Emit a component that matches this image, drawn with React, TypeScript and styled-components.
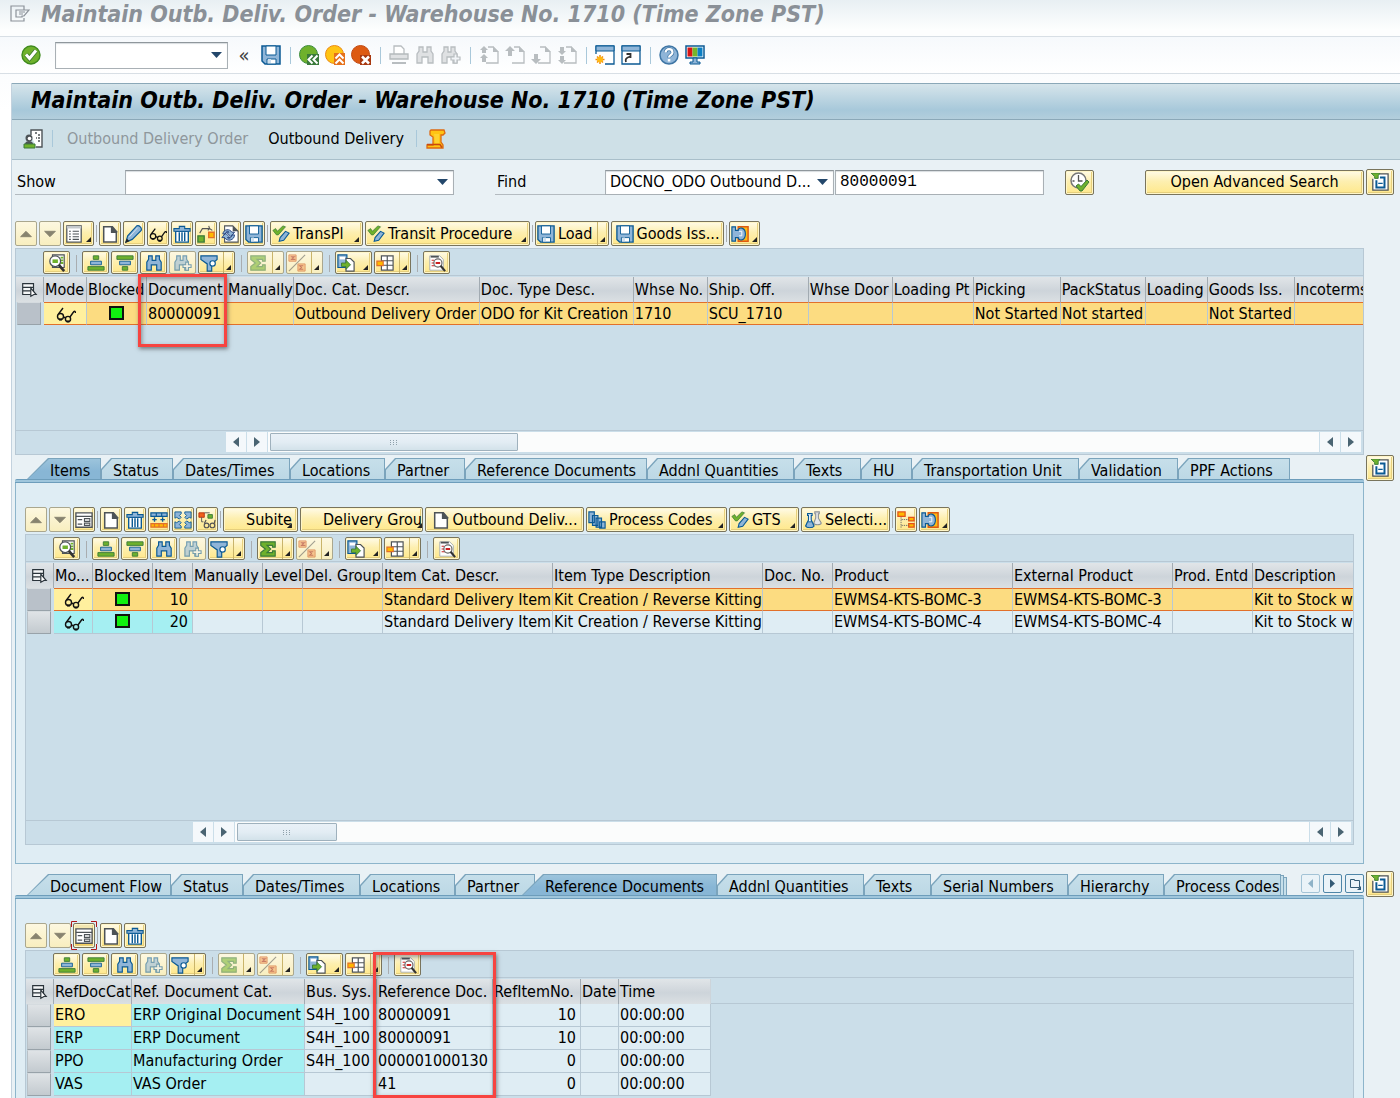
import React from "react";
import styled, { createGlobalStyle, css } from "styled-components";

const SANS = `"DejaVu Sans Condensed", "DejaVu Sans", "Noto Sans", sans-serif`;
const MONO = `"Liberation Mono", monospace`;

const c = {
  ink: "#000",
  body: "#e9f1f5",
  panel: "#dfedf4",
  grid: "#cbdee9",
  line: "#b7c8d4",
  tabLine: "#6d9dbb",
  select: "#fcdc81",
  selectLine: "#e2702a",
  key: "#a5eff2",
  focus: "#fff09e",
  blue: "#0b5a94",
  sky: "#8fb5d8",
  green: "#6fb12c",
  darkGreen: "#3a7a3a",
  grey: "#4d5357",
};

const Global = createGlobalStyle`
  * { box-sizing: border-box; }
  body { margin: 0; background: #fff; }
  button, input, select { font: inherit; color: inherit; }
`;

/* ---------- icons ---------- */

const pageShape = (
  <>
    <path d="M3 2h9l5 6v11H3z" fill="#fff" stroke={c.grey} strokeWidth="1.700" />
    <path d="M11 1h2l5 6v2h-7z" fill={c.grey} />
  </>
);
const glasses = (
  <g fill="none" stroke="#111" strokeWidth="1.400">
    <circle cx="4.500" cy="12.500" r="3" />
    <circle cx="12" cy="15" r="2.600" />
    <path d="M2.500 10L7 4M7.500 13l2 .8M14 13L17.500 8c1-1.500 2-.5 2 1" />
    <path d="M10.500 17.500h3M3 15.500h3" strokeWidth="2" />
  </g>
);
const binoculars = (fill: string, edge: string) => (
  <path
    d="M2 18V9l2-3V2h4v5h4V2h4v4l2 3v9h-5v-6H7v6z"
    fill={fill}
    stroke={edge}
    strokeWidth="1.300"
  />
);
const binoNext = (fill: string, edge: string) => (
  <>
    <path d="M1 18V9l2-3V2h4v5h3V2h4v4l2 3v9h-4v-6H6v6z" fill={fill} stroke={edge} strokeWidth="1.300" />
    <path d="M13 9h3v3h3v3h-3v3h-3v-3h-3v-3h3z" fill="#f2f5f8" stroke={edge} strokeWidth="1.200" />
  </>
);
const disk = (
  <>
    <path d="M1 1h18v18H4l-3-3z" fill={c.sky} stroke={c.blue} strokeWidth="1.500" />
    <path d="M5 1h10v9H5z" fill="#fff" stroke={c.blue} />
    <path d="M6 14h9v5H6z" fill="#fff" stroke={c.blue} />
    <path d="M7 14h3v4H7z" fill="#cfe0ee" />
  </>
);
const checkPencil = (
  <>
    <path d="M1 6l3-2 2 3 6-6 3 1-8 9H5z" fill={c.green} stroke={c.darkGreen} strokeWidth=".8" />
    <path d="M8 18l1-4 6-7 4 2-6 8z" fill={c.sky} stroke={c.blue} strokeWidth="1.200" />
  </>
);
const pagedBase = (
  <path d="M9 2h5l5 5v11H7" fill="none" stroke="#b8bdc0" strokeWidth="1.300" />
);
const fold = <path d="M14 1v6h6z" fill="#b8bdc0" />;
const puzzle = (
  <>
    <path d="M8 2h11v16H8z" fill="#fdb913" stroke="#dd5a12" strokeWidth="1.600" />
    <path d="M1 2h4v4h3c0-4 8-4 8 4s-8 8-8 4H5v4H1z" fill={c.sky} stroke={c.blue} strokeWidth="1.300" />
    <path d="M9 7h3v5H9" fill="none" stroke="#fff" />
  </>
);
const ball = (fill: string, edge: string) => (
  <circle cx="9.500" cy="9.500" r="9" fill={fill} stroke={edge} />
);

const ICONS: Record<string, React.ReactNode> = {
  menuFlag: (
    <path d="M14 6V2H1v15h13v-3M6 6h13l-5 6h-2v1H6zM9 8h6M9 10h4" fill="none" stroke="#8b9299" strokeWidth="1.200" />
  ),
  ok: (
    <>
      <circle cx="10" cy="10" r="9" fill={c.green} stroke="#3f8a1e" strokeWidth="1.400" />
      <path d="M5 9.500l3.500 4L15 5.500" fill="none" stroke="#3f7a2e" strokeWidth="4.600" />
      <path d="M5 9.500l3.500 4L15 5.500" fill="none" stroke="#fff" strokeWidth="3" />
    </>
  ),
  disk,
  back: (
    <>
      {ball(c.green, "#3c8c3c")}
      <path d="M8 9h12v11H8z" fill="#3a7a3a" />
      <path d="M13.500 10.500l-4 4 4 4M18.500 10.500l-4 4 4 4" fill="none" stroke="#fff" strokeWidth="2" />
    </>
  ),
  exit: (
    <>
      {ball("#ffc414", "#ec8a12")}
      <path d="M9 8h11v12H9z" fill="#e5701a" />
      <path d="M10.500 13.500l4-4 4 4M10.500 18.500l4-4 4 4" fill="none" stroke="#fff" strokeWidth="2" />
    </>
  ),
  cancel: (
    <>
      {ball("#dd5a12", "#c24a12")}
      <path d="M9 10h11v10H9z" fill="#a8380f" />
      <path d="M11 11.500l7 7M18 11.500l-7 7" stroke="#fff" strokeWidth="2.500" />
    </>
  ),
  print: (
    <>
      <path d="M5 9V1h7l3 3v5" fill="#fff" stroke="#b8bdc0" strokeWidth="1.300" />
      <path d="M1 9h18v5H1z" fill="#dfe1e3" stroke="#b4b9bc" strokeWidth="1.300" />
      <path d="M3 18h14" stroke="#b8bdc0" strokeWidth="2" />
    </>
  ),
  findGrey: binoculars("#dfe1e3", "#b8bdc0"),
  findNextGrey: binoNext("#dfe1e3", "#b8bdc0"),
  firstPage: (
    <>
      {pagedBase}
      {fold}
      <path d="M5 1l4 4H7v3H3V5H1zM5 9l4 4H7v4H3v-4H1z" fill="#b8bdc0" />
    </>
  ),
  prevPage: (
    <>
      {pagedBase}
      {fold}
      <path d="M5 1l5 5H7v5H3V6H0z" fill="#b8bdc0" />
    </>
  ),
  nextPage: (
    <>
      {pagedBase}
      {fold}
      <path d="M5 19l5-5H7V9H3v5H0z" fill="#b8bdc0" />
    </>
  ),
  lastPage: (
    <>
      {pagedBase}
      {fold}
      <path d="M5 10l4-4H7V2H3v4H1zM5 19l4-4H7v-4H3v4H1z" fill="#b8bdc0" />
    </>
  ),
  newSession: (
    <>
      <path d="M1 1h18v18H1z" fill="#fff" stroke={c.blue} strokeWidth="1.300" />
      <path d="M1 1h18v5H1z" fill={c.sky} stroke={c.blue} />
      <path d="M0 9h10v11H0z" fill="#fff" />
      <path d="M5 10v9M.5 14.500h9M2 11.500l6 6M8 11.500l-6 6" stroke="#f08a12" strokeWidth="1.500" />
      <circle cx="5" cy="14.500" r="3" fill="#ffb812" />
    </>
  ),
  shortcut: (
    <>
      <path d="M1 1h18v18H1z" fill="#fff" stroke={c.blue} strokeWidth="1.300" />
      <path d="M1 1h18v5H1z" fill={c.sky} stroke={c.blue} />
      <path d="M5 17c-1-3 0-4 4-5.500M5.500 9h4v4" fill="none" stroke="#333" strokeWidth="1.800" />
    </>
  ),
  help: (
    <>
      <circle cx="10" cy="10" r="9" fill={c.sky} stroke="#3f76a5" strokeWidth="1.500" />
      <path d="M6.500 7.500C6.500 3 13.500 3 13.500 7.500c0 2.500-3.500 2.500-3.500 5" fill="none" stroke="#3f76a5" strokeWidth="3.600" />
      <path d="M6.500 7.500C6.500 3 13.500 3 13.500 7.500c0 2.500-3.500 2.500-3.500 5" fill="none" stroke="#fff" strokeWidth="2.200" />
      <path d="M8.800 14h2.500v2.500H8.800z" fill="#fff" />
    </>
  ),
  monitor: (
    <>
      <path d="M1 1h18v12H1z" fill="#fff" stroke={c.blue} strokeWidth="1.500" />
      <path d="M2.500 2.500h5v9h-5z" fill="#d81414" />
      <path d="M7.500 2.500h5v9h-5z" fill="#76b52b" />
      <path d="M12.500 2.500h5v9h-5z" fill="#0a7fc4" />
      <path d="M8 13h4v4h3v2H5v-2h3z" fill={c.sky} stroke={c.blue} />
    </>
  ),
  personCard: (
    <>
      <path d="M8 6V1h11v17h-6" fill="#fff" stroke={c.grey} strokeWidth="1.400" />
      <path d="M12 4h2M15 6h2M13 9h1M15 9h2M15 12h2" stroke={c.grey} strokeWidth="1.500" />
      <circle cx="6" cy="9" r="3.500" fill={c.grey} />
      <path d="M2 15c0-4 8-4 8 0z" fill={c.grey} />
      <circle cx="6.500" cy="9.500" r="1.800" fill="#fff" />
      <path d="M1 15h11v4H1z" fill={c.green} stroke={c.darkGreen} />
    </>
  ),
  scroll: (
    <>
      <path d="M5 1h13l1 3-2 2h-2v7l2 3v3H1v-3h6V8L4 6V2z" fill="#ffc414" stroke="#dd6a12" strokeWidth="1.300" />
      <path d="M8 5h5v9H9z" fill="#ffd230" />
      <path d="M1 15.500h13l2 3" fill="none" stroke="#c8490f" strokeWidth="1.500" />
    </>
  ),
  up: <path d="M10 7l6 6H4z" fill="#2b2922" stroke="#2b2922" />,
  down: <path d="M10 13l6-6H4z" fill="#2b2922" stroke="#2b2922" />,
  list: (
    <>
      <path d="M2 1h16v18H2z" fill="#fff" stroke={c.grey} strokeWidth="1.400" />
      <path d="M2 1h16v3H2z" fill="#c5c9cc" />
      <path d="M4.500 7h2M4.500 10h2M4.500 13h2M4.500 16h2M8.500 7h7M8.500 10h7M8.500 13h7M8.500 16h7" stroke={c.grey} strokeWidth="1.200" />
    </>
  ),
  form: (
    <>
      <path d="M1 2h18v16H1z" fill="#fff" stroke={c.grey} strokeWidth="1.500" />
      <path d="M1 6h18M3 9.500h5M3 14.500h5" stroke={c.grey} strokeWidth="1.300" />
      <path d="M10.500 8.500h6v3h-6zM10.500 13.500h6v2.500h-6z" fill="none" stroke={c.grey} strokeWidth="1.200" />
    </>
  ),
  page: pageShape,
  pencil: (
    <>
      <path d="M1 19l2-7L13 1c3-1 6 2 5 5L8 16z" fill={c.sky} stroke={c.blue} strokeWidth="1.300" />
      <path d="M5 13L14 3" stroke="#dce9f4" />
      <path d="M0 20l2-5 3 3z" fill="#222" />
    </>
  ),
  glasses,
  trash: (
    <>
      <path d="M3 7h14v12H3z" fill="#fff" stroke={c.blue} strokeWidth="1.500" />
      <path d="M7 8v10M10 8v10M13 8v10" stroke={c.blue} strokeWidth="1.600" />
      <path d="M1 4h6V1.500h6V4h6v3H1z" fill={c.sky} stroke={c.blue} strokeWidth="1.200" />
    </>
  ),
  swap: (
    <>
      <path d="M1 12h7v7H1z" fill={c.green} stroke={c.darkGreen} strokeWidth="1.500" />
      <path d="M13 8h6v6h-6z" fill="#ffb800" stroke="#e2702a" strokeWidth="1.500" />
      <path d="M3 9l3-5h8l3 2M13 1l1 3-2 2" fill="none" stroke="#555" strokeWidth="1.200" />
    </>
  ),
  refresh: (
    <>
      <path d="M4 1h9l6 6v12H4z" fill="#fff" stroke={c.grey} strokeWidth="1.200" />
      <path d="M13 1l6 6h-6z" fill={c.grey} />
      <path d="M2 10c1-6 8-6 10-2h3l-4 5-5-5h3c-2-2-4 0-4 2zM15 11c0 6-8 8-11 3H1l4-5 5 5H7c2 2 5 0 5-3z" fill={c.sky} stroke="#23407a" />
    </>
  ),
  checkPencil,
  puzzle,
  detail: (
    <>
      <path d="M5 1h13v14H5z" fill="#fff" stroke={c.grey} strokeWidth="1.300" />
      <path d="M14 4h3M14 7h3M14 10h3" stroke={c.green} strokeWidth="2" />
      <circle cx="8" cy="8" r="6" fill="#fff" stroke={c.grey} strokeWidth="1.400" />
      <path d="M5 6h6v4H5z" fill={c.green} />
      <path d="M12 12l6 7" stroke="#333" strokeWidth="3" />
    </>
  ),
  sortAsc: (
    <>
      <path d="M7 2h6v4H7z" fill={c.green} stroke={c.darkGreen} />
      <path d="M4 8h12v4H4z" fill={c.sky} stroke={c.blue} />
      <path d="M1 14h18v4H1z" fill={c.green} stroke={c.darkGreen} />
    </>
  ),
  sortDesc: (
    <>
      <path d="M1 2h18v4H1z" fill={c.green} stroke={c.darkGreen} />
      <path d="M4 8h12v4H4z" fill={c.sky} stroke={c.blue} />
      <path d="M7 14h6v4H7z" fill={c.green} stroke={c.darkGreen} />
    </>
  ),
  find: binoculars(c.sky, c.blue),
  findNext: binoNext(c.sky, c.blue),
  filter: (
    <>
      <path d="M1 2h18v4l-6 5v8H8v-8L1 6z" fill={c.sky} stroke={c.blue} strokeWidth="1.300" />
      <circle cx="14" cy="10.500" r="3" fill="#fff" stroke={c.blue} strokeWidth="1.300" />
    </>
  ),
  sum: (
    <path d="M2 2h16v6h-3V6H9l4 4-4 4h6v-2h3v6H2v-4l5-4-5-4z" fill={c.green} stroke={c.darkGreen} strokeWidth="1.300" />
  ),
  subtotal: (
    <>
      <path d="M1 1h8v7H1zM11 11h8v8h-8z" fill="#f4a460" stroke="#c8490f" />
      <path d="M3 3h4L5 4.500 7 6H3M17 13h-4l2 2-2 2h4" fill="none" stroke="#a01b0a" strokeWidth="1.200" />
      <path d="M1 19L19 1" stroke="#555" strokeWidth="1.200" />
    </>
  ),
  exportFile: (
    <>
      <path d="M1 1h10v14H1z" fill={c.sky} stroke={c.blue} strokeWidth="1.300" />
      <path d="M3 3h6v3H3z" fill="#fff" />
      <path d="M10 5h5l4 4v10h-9z" fill="#fff" stroke={c.grey} strokeWidth="1.300" />
      <path d="M5 10h5V7l5 5-5 5v-3H5z" fill={c.green} stroke={c.darkGreen} />
    </>
  ),
  layout: (
    <>
      <path d="M6 2h13v16H6zM6 7.500h13M6 12.500h13M12.500 2v16" fill="#fff" stroke={c.grey} strokeWidth="1.300" />
      <path d="M1 8h7v5H1z" fill="#ffb800" stroke="#e2702a" strokeWidth="1.300" />
    </>
  ),
  preview: (
    <>
      <path d="M2 2h11l4 4v12H2z" fill="#fff" stroke="#a4aaae" />
      <path d="M3 2h9v2H3z" fill={c.grey} />
      <path d="M4 7h3M4 10h3M4 13h4" stroke="#c22" strokeWidth="1.200" />
      <circle cx="11" cy="10" r="4.500" fill="#fff" stroke="#666" strokeWidth="1.300" />
      <path d="M8.500 10h5" stroke="#c22" strokeWidth="2.200" />
      <path d="M14 13l5 6" stroke="#333" strokeWidth="2.400" />
    </>
  ),
  insertRow: (
    <>
      <path d="M1 2h18v4H1zM7 2v4M13 2v4" fill={c.sky} stroke={c.blue} strokeWidth="1.300" />
      <path d="M5 7v5M2.500 9.500h5M14 7v5M11.500 9.500h5" stroke={c.blue} strokeWidth="1.500" />
      <path d="M1 14h18v4H1zM5 14v4M10 14v4M15 14v4" fill="#ffb800" stroke="#e2702a" strokeWidth="1.300" />
    </>
  ),
  expand: (
    <path d="M1 1h7v2L6 5l2 2-2 2-3-2-2 1zM19 1h-7v2l2 2-2 2 2 2 3-2 2 1zM1 19h7v-2l-2-2 2-2-2-2-3 2-2-1zM19 19h-7v-2l2-2-2-2 2-2 3 2 2-1z" fill={c.sky} stroke={c.blue} />
  ),
  treeView: (
    <>
      <path d="M1 2h6v5H1z" fill="#f0601a" stroke="#b8300f" />
      <path d="M11 4h5v4h-5z" fill={c.green} stroke={c.darkGreen} />
      <path d="M7 2h6M4 7v5h2" fill="none" stroke="#555" />
      <g fill="none" stroke="#555" strokeWidth="1.300">
        <circle cx="9.500" cy="16" r="2.600" />
        <circle cx="16" cy="16" r="2.600" />
        <path d="M7 14l2-4M18 14l1-4" />
      </g>
    </>
  ),
  stack: (
    <path d="M1 1h6v12H1zM5 5h6v11H5zM9 8h6v10H9zM13 12h6v7h-6z" fill={c.sky} stroke={c.blue} strokeWidth="1.300" />
  ),
  flasks: (
    <>
      <path d="M12 1h5v2h-1v5l3 5c1 3-9 3-8 0l2-5V3h-1z" fill="#e6e8ea" stroke="#8a9094" strokeWidth="1.200" />
      <path d="M4 3h5v2H8v5l3 6c1 3-10 3-9 0l3-6V5H4z" fill="#fff" stroke={c.blue} strokeWidth="1.300" />
      <path d="M4 12h5l2 5c-2 2-7 2-9 0z" fill={c.sky} stroke={c.blue} />
    </>
  ),
  tree: (
    <>
      <path d="M1 1h8v5H1zM13 7h6v4h-6zM13 14h6v4h-6z" fill="#ffb800" stroke="#e2521a" strokeWidth="1.400" />
      <path d="M4.500 7v12M5 9.500h8M5 16h8" fill="none" stroke="#666" strokeDasharray="1.500 1" />
    </>
  ),
  clockCheck: (
    <>
      <circle cx="8.500" cy="8.500" r="7.500" fill="#fff" stroke="#777" strokeWidth="1.500" />
      <path d="M8.500 3v6h4M2.500 9h2" fill="none" stroke="#555" strokeWidth="1.300" />
      <path d="M6 14l2.500-2 2.500 2.500L17 8l2 2-7 9h-2z" fill={c.green} stroke={c.darkGreen} />
    </>
  ),
  sidePage: (
    <>
      <path d="M2 6.500V19h17V1H9" fill="#fff" stroke={c.grey} strokeWidth="1.400" />
      <path d="M10 5h5v11H6V8" fill="#fff" stroke={c.blue} strokeWidth="2.200" />
      <path d="M8 11.500h5" stroke={c.blue} strokeWidth="1.300" />
      <path d="M0 0h10L8 3v3H4V4z" fill={c.green} stroke={c.darkGreen} />
    </>
  ),
  pickRows: (
    <>
      <path d="M3 3h12v12H3zM3 7h12M3 11h9" fill="#f4f6f7" stroke="#2a333a" strokeWidth="1.300" />
      <path d="M12 8l6 7h-2.500l-3.500 2z" fill="#fff" stroke="#2a333a" strokeWidth="1.300" />
    </>
  ),
  lamp: <path d="M3 3h13v12H3z" fill="#10f010" stroke="#111" strokeWidth="2" />,
};

const Svg = styled.svg`
  display: block;
  flex: none;
`;
const Icon = ({ name, size = 20 }: { name: string; size?: number }) => (
  <Svg width={size} height={size} viewBox="0 0 20 20" aria-hidden="true">
    {ICONS[name]}
  </Svg>
);

/* ---------- application frame ---------- */

const Page = styled.div`
  display: flex;
  flex-direction: column;
  min-height: 100vh;
  overflow: hidden;
  font: 16px/20px ${SANS};
  color: ${c.ink};
  background: linear-gradient(#f4f8fb, #fff 110px);
`;

const TitleStrip = styled.header`
  display: flex;
  align-items: center;
  gap: 11px;
  height: 37px;
  padding: 0 10px 8px;
  background: linear-gradient(#e8eff3, #fdfefe 30px);
  border-bottom: 1px solid #d8dfe5;
`;

const Title = styled.h1<{ $muted?: boolean }>`
  margin: 0;
  font-size: 23px;
  line-height: 28px;
  font-weight: bold;
  font-style: italic;
  white-space: nowrap;
  color: ${(p) => (p.$muted ? "#8a9097" : c.ink)};
`;

const CommandBar = styled.nav`
  display: flex;
  align-items: center;
  gap: 6px;
  height: 37px;
  padding-left: 21px;
  background: linear-gradient(#f6f9fc, #fff);
  border-bottom: 1px solid #d8dfe5;
`;

const FlatButton = styled.button`
  display: flex;
  flex: none;
  padding: 0;
  border: 0;
  background: none;
`;

const BarSplit = styled.span`
  flex: none;
  width: 6px;
  height: 17px;
  background: linear-gradient(#a9c8da, #a9c8da) center / 1px 100% no-repeat;
`;

const Picker = styled.span<{ $width: number }>`
  display: inline-grid;
  flex: 0 1 ${(p) => p.$width}px;
  min-width: 0;
  align-items: center;

  &::after {
    content: "";
    grid-area: 1 / 1;
    justify-self: end;
    width: 11px;
    height: 6px;
    margin-right: 6px;
    background: #23476b;
    clip-path: polygon(0 0, 100% 0, 50% 100%);
    pointer-events: none;
  }
`;

const field = css`
  appearance: none;
  width: 100%;
  height: 25px;
  margin: 0;
  padding: 0 4px;
  border: 1px solid #a9b0b5;
  border-top-color: #8f979c;
  border-radius: 0;
  background: #fff;
  box-shadow: inset 0 1px 1px #d8dcdf;
`;
const Select = styled.select`
  ${field}
  grid-area: 1 / 1;
  padding-right: 16px;
  text-overflow: ellipsis;
`;
const Input = styled.input<{ $tall?: boolean }>`
  ${field}
  grid-area: 1 / 1;
  height: ${(p) => (p.$tall ? 27 : 25)}px;
  font-family: ${MONO};
`;

const CommandField = styled.span`
  display: flex;
  width: 173px;
  margin: 0 4px 0 8px;
`;
const Collapse = styled(FlatButton)`
  width: 12px;
  margin-right: 5px;
  justify-content: center;
  font-size: 20px;
  line-height: 20px;
  color: #444;
`;

const Window = styled.main`
  display: flex;
  flex: 1;
  flex-direction: column;
  margin: 9px 0 0 11px;
  background: ${c.body};
  border-left: 1px solid #c3d2de;
`;
const WindowTitle = styled.div`
  display: flex;
  align-items: center;
  height: 37px;
  padding: 0 0 3px 19px;
  border: 1px solid #8ba8b8;
  border-width: 1px 0;
  background: linear-gradient(#d6e5eb, #a7c8da 75%, #b3cedc);
`;
const ActionBar = styled.div`
  display: flex;
  align-items: center;
  height: 40px;
  padding: 0 0 2px 11px;
  background: #cee0e7;
  border-bottom: 1px solid #a9bfca;
`;
const ActionText = styled(FlatButton)<{ $left: number; $right: number }>`
  margin: 0 ${(p) => p.$right}px 0 ${(p) => p.$left}px;
  white-space: nowrap;

  &:disabled {
    color: #8e979c;
  }
`;

const Section = styled.section<{ $top?: number; $grow?: boolean }>`
  display: flex;
  gap: 2px;
  padding: ${(p) => p.$top ?? 0}px 6px 0 3px;
  flex: ${(p) => (p.$grow ? 1 : "none")};
`;
const SectionMain = styled.div`
  display: flex;
  flex: 1;
  flex-direction: column;
  min-width: 0;
`;

/* ---------- yellow buttons ---------- */

const YellowButton = styled.button<{ $width?: number; $pressed?: boolean; $short?: boolean; $center?: boolean }>`
  display: flex;
  flex: none;
  align-items: center;
  justify-content: ${(p) => (p.$center ? "center" : "flex-start")};
  gap: 3px;
  width: ${(p) => p.$width ?? 22}px;
  height: ${(p) => (p.$short ? 23 : 25)}px;
  padding: 0 0 0 ${(p) => (p.$center ? 0 : 1)}px;
  overflow: hidden;
  border: 1px solid #79745c;
  border-radius: 2px;
  background: ${(p) =>
    p.$pressed ? "linear-gradient(#f1e6b4, #fbe9a0 70%, #f0bf38)" : "linear-gradient(#fffbe8, #fdefb0 45%, #ffe88a)"};
  box-shadow: inset 0 0 0 1px #fff6c8, inset -1px -1px 0 1px #e6cf7c;
  white-space: nowrap;

  &:disabled {
    color: inherit;
    border-color: #aaa78e;
    background: linear-gradient(#fdf8e0, #f8eebf);
    box-shadow: none;
  }
  &:disabled svg {
    opacity: 0.55;
  }
`;
const SideButton = styled(YellowButton)`
  width: 28px;
  height: 26px;
`;
const ButtonLabel = styled.span`
  flex: none;
  text-align: left;
`;
const IconSlot = styled.span`
  flex: none;
  width: 18px;
`;
const Corner = styled.span<{ $split?: boolean; $over?: boolean }>`
  display: flex;
  flex: none;
  align-self: stretch;
  align-items: flex-end;
  justify-content: flex-end;
  width: ${(p) => (p.$split ? 11 : 8)}px;
  margin-left: ${(p) => (p.$over ? "-8px" : "auto")};
  padding: 0 3px 3px 0;
  border-left: ${(p) => (p.$split ? "1px solid #c9b46a" : "0")};

  &::after {
    content: "";
    width: 5px;
    height: 5px;
    background: #222;
    clip-path: polygon(100% 0, 100% 100%, 0 100%);
  }
`;

const Tools = styled.div`
  display: flex;
  gap: 2px;
  height: 25px;
`;
const ToolSplit = styled.span<{ $wide?: boolean }>`
  flex: none;
  align-self: center;
  width: ${(p) => (p.$wide ? 8 : 1)}px;
  height: 17px;
  background: linear-gradient(#a9adb0, #a9adb0) center / 1px 100% no-repeat;
`;

type Tool = {
  icon?: string;
  name?: string;
  label?: string;
  width?: number;
  corner?: "plain" | "split" | "over";
  off?: boolean;
  pressed?: boolean;
};
type ToolItem = Tool | "|";

const Focused = styled.span`
  position: relative;
  display: flex;

  > svg {
    position: absolute;
    top: -3px;
    left: -3px;
    pointer-events: none;
  }
`;

const ToolButton = ({ tool, short }: { tool: Tool; short?: boolean }) => {
  const button = (
    <YellowButton
      type="button"
      aria-label={tool.label ?? tool.name ?? tool.icon}
      $width={tool.width ?? (short ? 27 : 22)}
      $short={short}
      $pressed={tool.pressed}
      $center={!tool.corner}
      disabled={tool.off}
    >
      {tool.icon ? <Icon name={tool.icon} size={18} /> : <IconSlot />}
      {tool.label && <ButtonLabel>{tool.label}</ButtonLabel>}
      {tool.corner && <Corner $split={tool.corner === "split"} $over={tool.corner === "over"} />}
    </YellowButton>
  );
  return tool.pressed ? (
    <Focused>
      {button}
      <svg width="28" height="31" viewBox="0 0 28 31" aria-hidden="true">
        <path d="M1.500 7V1.500H7M21 1.500h5.500V7M26.500 24v5.500H21M7 29.500H1.500V24" fill="none" stroke="#b01818" />
      </svg>
    </Focused>
  ) : (
    button
  );
};

const ToolRow = ({ items, short }: { items: ToolItem[]; short?: boolean }) => (
  <>
    {items.map((t, i) =>
      t === "|" ? <ToolSplit key={i} $wide={short} /> : <ToolButton key={i} tool={t} short={short} />,
    )}
  </>
);

/* ---------- search row ---------- */

const SearchRow = styled.form`
  display: flex;
  align-items: center;
  height: 26px;
  margin-bottom: 26px;
`;
const SearchLabel = styled.label<{ $left?: number }>`
  flex: none;
  width: 110px;
  height: 25px;
  margin-left: ${(p) => p.$left ?? 0}px;
  padding-left: 2px;
  line-height: 24px;
  border-bottom: 1px solid #b4bbc0;
`;
const FindBox = styled.span`
  flex: 0 1 209px;
  display: flex;
  min-width: 0;
  margin: 0 21px 0 1px;
`;
const Push = styled.span`
  flex: 1;
`;

/* ---------- data grid ---------- */

const GridBox = styled.div<{ $grow?: boolean }>`
  position: relative;
  display: flex;
  flex: ${(p) => (p.$grow ? 1 : "none")};
  flex-direction: column;
  margin-top: 2px;
  background: ${c.grid};
  border: 1px solid ${c.line};
  border-bottom-width: ${(p) => (p.$grow ? 0 : 1)}px;
`;
const GridTools = styled.div`
  display: flex;
  gap: 2px;
  height: 27px;
  padding: 2px 0 0 27px;
  border-bottom: 1px solid ${c.line};
`;
const GridView = styled.div<{ $height: number }>`
  min-height: ${(p) => p.$height}px;
  margin-top: 1px;
  overflow: hidden;
  background: linear-gradient(${c.line}, ${c.line}) 0 24px / 100% 1px no-repeat;
`;
const Table = styled.table`
  table-layout: fixed;
  width: max-content;
  border-collapse: separate;
  border-spacing: 0;
`;
const HeadCell = styled.th<{ $last?: boolean }>`
  height: 25px;
  padding: 0 0 0 1px;
  overflow: hidden;
  text-align: left;
  font-weight: normal;
  white-space: nowrap;
  background: linear-gradient(#e1e5e8, #cdd4da 55%, #dbe0e3);
  border-right: 1px solid ${(p) => (p.$last ? "#cdd4da" : "#a2abb2")};

  > svg {
    margin-left: 3px;
  }
`;
type Tone = "plain" | "select" | "key" | "focus";
const tones: Record<Tone, string> = { plain: c.panel, select: c.select, key: c.key, focus: c.focus };
const Cell = styled.td<{ $tone: Tone; $selected?: boolean; $right?: boolean }>`
  height: 23px;
  padding: 0 ${(p) => (p.$right ? 4 : 0)}px 0 1px;
  overflow: hidden;
  text-align: ${(p) => (p.$right ? "right" : "left")};
  white-space: nowrap;
  background: ${(p) => tones[p.$tone]};
  border-right: 1px solid ${c.line};
  border-bottom: 1px solid ${(p) => (p.$selected ? c.selectLine : c.line)};
  ${(p) => p.$selected && `border-top: 1px solid ${c.selectLine};`}

  > svg {
    margin: 0 auto;
  }
`;
const RowMark = styled.td`
  height: 23px;
  padding: 0 3px 0 1px;
  background: ${c.grid};
`;
const RowButton = styled.button<{ $selected?: boolean }>`
  display: block;
  width: 100%;
  height: 23px;
  padding: 0;
  border: 1px solid #a9b2b9;
  border-color: #d5dbdf #98a2a9 #98a2a9 #b9c1c7;
  background: ${(p) => (p.$selected ? "#b9c1c9" : "linear-gradient(#dfe3e6, #c3cacf)")};
`;

type Column = { title: string; width: number; right?: boolean };
type Row = { selected?: boolean; cells: string[]; tone: (i: number) => Tone };

const cellBody = (v: string) => {
  if (v === "@display") return <Icon name="glasses" />;
  if (v === "@green") return <Icon name="lamp" />;
  return v;
};

const DataTable = ({ columns, rows, label }: { columns: Column[]; rows: Row[]; label: string }) => (
  <Table aria-label={label}>
    <colgroup>
      <col width={28} />
      {columns.map((col) => (
        <col key={col.title} width={col.width} />
      ))}
    </colgroup>
    <thead>
      <tr>
        <HeadCell>
          <Icon name="pickRows" size={18} />
        </HeadCell>
        {columns.map((col, i) => (
          <HeadCell key={col.title} scope="col" $last={i === columns.length - 1}>
            {col.title}
          </HeadCell>
        ))}
      </tr>
    </thead>
    <tbody>
      {rows.map((row, r) => (
        <tr key={r}>
          <RowMark>
            <RowButton type="button" aria-label={`Row ${r + 1}`} $selected={row.selected} />
          </RowMark>
          {row.cells.map((v, i) => (
            <Cell key={i} $tone={row.tone(i)} $selected={row.selected} $right={columns[i].right}>
              {cellBody(v)}
            </Cell>
          ))}
        </tr>
      ))}
    </tbody>
  </Table>
);

/* ---------- scroll bar ---------- */

const ScrollRow = styled.div<{ $left: number }>`
  display: flex;
  gap: 1px;
  height: 24px;
  padding: 1px 2px 2px ${(p) => p.$left}px;
  border-top: 1px solid ${c.line};
`;
const ScrollArrow = styled.button<{ $back?: boolean }>`
  display: flex;
  flex: none;
  align-items: center;
  justify-content: center;
  width: 20px;
  height: 20px;
  padding: 0;
  border: 0;
  background: #f4f8fb;

  &::after {
    content: "";
    width: 6px;
    height: 10px;
    background: #4a6472;
    clip-path: ${(p) => (p.$back ? "polygon(100% 0, 100% 100%, 0 50%)" : "polygon(0 0, 100% 50%, 0 100%)")};
  }
`;
const Track = styled.div`
  flex: 1;
  height: 20px;
  padding: 1px 2px;
  background: #fbfcfc;
`;
const Thumb = styled.div<{ $width: number }>`
  display: flex;
  align-items: center;
  justify-content: center;
  width: ${(p) => p.$width}px;
  height: 18px;
  border: 1px solid #9fb1bd;
  border-radius: 1px;
  background: linear-gradient(#e9f1f7, #e3edf4 50%, #d3e2ea);
`;
const ScrollBar = ({ left, thumb }: { left: number; thumb: number }) => (
  <ScrollRow $left={left}>
    <ScrollArrow type="button" aria-label="Scroll left" $back />
    <ScrollArrow type="button" aria-label="Scroll right" />
    <Track>
      <Thumb $width={thumb}>
        <svg width="9" height="5" viewBox="0 0 9 5" aria-hidden="true">
          <path d="M0 .5h1M3 .5h1M6 .5h1M0 2.500h1M3 2.500h1M6 2.500h1M0 4.500h1M3 4.500h1M6 4.500h1" stroke="#8fa0ab" />
        </svg>
      </Thumb>
    </Track>
    <ScrollArrow type="button" aria-label="Scroll left" $back />
    <ScrollArrow type="button" aria-label="Scroll right" />
  </ScrollRow>
);

/* ---------- tabs ---------- */

const TabHead = styled.div`
  display: flex;
  height: 24px;
  padding: 3px 0 0 12px;
`;
const Tab = styled.button<{ $width: number; $active?: boolean; $slant?: boolean; $overlap?: boolean }>`
  --cut: ${(p) => (p.$slant ? "polygon(0 100%, 21px 0, 100% 0, 100% 100%)" : "polygon(0 11px, 10px 0, 100% 0, 100% 100%, 0 100%)")};
  position: relative;
  isolation: isolate;
  flex: none;
  width: ${(p) => p.$width}px;
  height: 21px;
  margin-left: ${(p) => (p.$overlap ? -13 : 0)}px;
  padding: 1px 0 0 ${(p) => (p.$slant ? 23 : 12)}px;
  border: 0;
  background: #7ba4bc;
  clip-path: var(--cut);
  text-align: left;
  line-height: 24px;
  white-space: nowrap;

  &::before {
    content: "";
    position: absolute;
    inset: 1px 1px 0 1px;
    z-index: -1;
    background: ${(p) => (p.$active ? "linear-gradient(#9cc4dc, #88b6d5 60%)" : "linear-gradient(#c6dfea, #bcd8e5)")};
    clip-path: var(--cut);
  }
`;
const StackEdge = styled.span<{ $top: number }>`
  width: 3px;
  height: ${(p) => 21 - p.$top}px;
  margin-top: ${(p) => p.$top}px;
  border: 1px solid #7ba4bc;
  border-width: 1px 1px 0 0;
  background: #c6dfea;
`;
const TabNav = styled.div`
  display: flex;
  gap: 3px;
  margin-left: auto;
`;
const TabNavButton = styled.button`
  display: flex;
  align-items: center;
  justify-content: center;
  width: 19px;
  height: 19px;
  padding: 0;
  border: 1px solid #4f86a8;
  border-radius: 2px;
  background: #eaf3f8;

  &:disabled {
    border-color: #a3c3d6;
    opacity: 1;
  }
`;
const TabRule = styled.div`
  height: 4px;
  border: 1px solid ${c.tabLine};
  border-width: 1px 0;
  border-radius: 2px 2px 0 0;
  background: #9fc6dc;
`;
const TabPanel = styled.div<{ $grow?: boolean }>`
  display: flex;
  flex: ${(p) => (p.$grow ? 1 : "none")};
  flex-direction: column;
  padding: 24px 9px ${(p) => (p.$grow ? 0 : 18)}px;
  border: 1px solid #8db5cb;
  border-top: 0;
  border-bottom-width: ${(p) => (p.$grow ? 0 : 1)}px;
  background: ${c.panel};
`;

type TabDef = { text: string; width: number; active?: boolean };
const Tabs = ({ tabs, children }: { tabs: TabDef[]; children?: React.ReactNode }) => (
  <>
    <TabHead role="tablist">
      {tabs.map((t, i) => (
        <Tab
          key={t.text}
          type="button"
          role="tab"
          aria-selected={!!t.active}
          $width={t.width}
          $active={t.active}
          $slant={i === 0 || t.active}
          $overlap={i > 0 && t.active}
        >
          {t.text}
        </Tab>
      ))}
      {children}
    </TabHead>
    <TabRule />
  </>
);

/* Annotation frame drawn over the grid */
const Marker = styled.div<{ $x: number; $y: number; $w: number; $h: number }>`
  position: absolute;
  left: ${(p) => p.$x}px;
  top: ${(p) => p.$y}px;
  width: ${(p) => p.$w}px;
  height: ${(p) => p.$h}px;
  border: 3px solid #f74440;
  box-shadow: 1px 2px 4px rgba(60, 60, 60, 0.6), inset 1px 2px 4px rgba(60, 60, 60, 0.5);
  pointer-events: none;
`;

/* ---------- data ---------- */

const commands: string[] = [
  "disk", "|", "back", "exit", "cancel", "|", "print", "findGrey", "findNextGrey", "|",
  "firstPage", "prevPage", "nextPage", "lastPage", "|", "newSession", "shortcut", "|", "help", "monitor",
];

const gridTools = (sumOff: boolean): ToolItem[] => [
  { icon: "sortAsc" },
  { icon: "sortDesc" },
  { icon: "find" },
  { icon: "findNext", off: true },
  { icon: "filter", width: 37, corner: "split" },
  "|",
  { icon: "sum", width: 37, corner: "split", off: sumOff },
  { icon: "subtotal", width: 37, corner: "split", off: true },
  "|",
  { icon: "exportFile", width: 37, corner: "plain" },
  { icon: "layout", width: 37, corner: "split" },
  "|",
  { icon: "preview" },
];

const headerTools: ToolItem[] = [
  { icon: "up", off: true },
  { icon: "down", off: true },
  { icon: "list", width: 31, corner: "plain" },
  "|",
  { icon: "page" },
  { icon: "pencil" },
  { icon: "glasses" },
  { icon: "trash" },
  { icon: "swap" },
  { icon: "refresh" },
  { icon: "disk" },
  "|",
  { icon: "checkPencil", label: "TransPl", width: 93, corner: "plain" },
  { icon: "checkPencil", label: "Transit Procedure", width: 165, corner: "plain" },
  "|",
  { icon: "disk", label: "Load", width: 74, corner: "split" },
  { icon: "disk", label: "Goods Iss...", width: 113 },
  "|",
  { icon: "puzzle", width: 31, corner: "plain" },
];

const itemTools: ToolItem[] = [
  { icon: "up", off: true },
  { icon: "down", off: true },
  { icon: "form" },
  "|",
  { icon: "page" },
  { icon: "trash" },
  { icon: "insertRow" },
  { icon: "expand" },
  { icon: "treeView" },
  "|",
  { label: "Subite", width: 75, corner: "over" },
  { label: "Delivery Grou", width: 123, corner: "over" },
  { icon: "page", label: "Outbound Deliv...", width: 159 },
  { icon: "stack", label: "Process Codes", width: 141, corner: "plain" },
  { icon: "checkPencil", label: "GTS", width: 70, corner: "plain" },
  { icon: "flasks", label: "Selecti...", width: 89 },
  "|",
  { icon: "tree" },
  { icon: "puzzle", width: 31, corner: "plain" },
];

const detailTools: ToolItem[] = [
  { icon: "up", off: true },
  { icon: "down", off: true },
  { icon: "form", pressed: true },
  "|",
  { icon: "page" },
  { icon: "trash" },
];

const orderColumns: Column[] = [
  { title: "Mode", width: 43 },
  { title: "Blocked", width: 60 },
  { title: "Document", width: 80 },
  { title: "Manually", width: 66 },
  { title: "Doc. Cat. Descr.", width: 186 },
  { title: "Doc. Type Desc.", width: 154 },
  { title: "Whse No.", width: 74 },
  { title: "Ship. Off.", width: 101 },
  { title: "Whse Door", width: 84 },
  { title: "Loading Pt", width: 81 },
  { title: "Picking", width: 87 },
  { title: "PackStatus", width: 85 },
  { title: "Loading", width: 62 },
  { title: "Goods Iss.", width: 87 },
  { title: "Incoterms", width: 160 },
];
const orderRows: Row[] = [
  {
    selected: true,
    cells: [
      "@display", "@green", "80000091", "", "Outbound Delivery Order", "ODO for Kit Creation", "1710", "SCU_1710",
      "", "", "Not Started", "Not started", "", "Not Started", "",
    ],
    tone: (i) => (i === 0 ? "focus" : "select"),
  },
];

const itemColumns: Column[] = [
  { title: "Mo...", width: 39 },
  { title: "Blocked", width: 60 },
  { title: "Item", width: 40, right: true },
  { title: "Manually", width: 70 },
  { title: "Level", width: 40 },
  { title: "Del. Group", width: 80 },
  { title: "Item Cat. Descr.", width: 170 },
  { title: "Item Type Description", width: 210 },
  { title: "Doc. No.", width: 70 },
  { title: "Product", width: 180 },
  { title: "External Product", width: 160 },
  { title: "Prod. Entd", width: 80 },
  { title: "Description", width: 280 },
];
const itemRow = (item: string, product: string) => [
  "@display", "@green", item, "", "", "", "Standard Delivery Item", "Kit Creation / Reverse Kitting", "",
  product, product, "", "Kit to Stock w",
];
const itemRows: Row[] = [
  { selected: true, cells: itemRow("10", "EWMS4-KTS-BOMC-3"), tone: (i) => (i === 0 ? "focus" : "select") },
  { cells: itemRow("20", "EWMS4-KTS-BOMC-4"), tone: (i) => (i < 3 ? "key" : "plain") },
];

const refColumns: Column[] = [
  { title: "RefDocCat", width: 78 },
  { title: "Ref. Document Cat.", width: 173 },
  { title: "Bus. Sys.", width: 72 },
  { title: "Reference Doc.", width: 116 },
  { title: "RefItemNo.", width: 88, right: true },
  { title: "Date", width: 38 },
  { title: "Time", width: 92 },
];
const refTone = (i: number): Tone => (i < 2 ? "key" : "plain");
const refRows: Row[] = [
  {
    cells: ["ERO", "ERP Original Document", "S4H_100", "80000091", "10", "", "00:00:00"],
    tone: (i) => (i === 0 ? "focus" : refTone(i)),
  },
  { cells: ["ERP", "ERP Document", "S4H_100", "80000091", "10", "", "00:00:00"], tone: refTone },
  { cells: ["PPO", "Manufacturing Order", "S4H_100", "000001000130", "0", "", "00:00:00"], tone: refTone },
  { cells: ["VAS", "VAS Order", "", "41", "0", "", "00:00:00"], tone: refTone },
];

const headerTabs: TabDef[] = [
  { text: "Items", width: 74, active: true },
  { text: "Status", width: 72 },
  { text: "Dates/Times", width: 117 },
  { text: "Locations", width: 95 },
  { text: "Partner", width: 80 },
  { text: "Reference Documents", width: 182 },
  { text: "Addnl Quantities", width: 147 },
  { text: "Texts", width: 67 },
  { text: "HU", width: 51 },
  { text: "Transportation Unit", width: 167 },
  { text: "Validation", width: 99 },
  { text: "PPF Actions", width: 112 },
];
const detailTabs: TabDef[] = [
  { text: "Document Flow", width: 144 },
  { text: "Status", width: 72 },
  { text: "Dates/Times", width: 117 },
  { text: "Locations", width: 95 },
  { text: "Partner", width: 80 },
  { text: "Reference Documents", width: 195, active: true },
  { text: "Addnl Quantities", width: 147 },
  { text: "Texts", width: 67 },
  { text: "Serial Numbers", width: 137 },
  { text: "Hierarchy", width: 96 },
  { text: "Process Codes", width: 117 },
];

const TITLE = "Maintain Outb. Deliv. Order - Warehouse No. 1710 (Time Zone PST)";

export default function App() {
  return (
    <Page>
      <Global />
      <TitleStrip>
        <Icon name="menuFlag" />
        <Title as="div" $muted>
          {TITLE}
        </Title>
      </TitleStrip>
      <CommandBar aria-label="System functions">
        <FlatButton type="button" aria-label="Enter">
          <Icon name="ok" />
        </FlatButton>
        <CommandField>
          <Picker $width={173}>
            <Input $tall aria-label="Command" />
          </Picker>
        </CommandField>
        <Collapse type="button">«</Collapse>
        {commands.map((name, i) =>
          name === "|" ? (
            <BarSplit key={i} />
          ) : (
            <FlatButton key={i} type="button" aria-label={name}>
              <Icon name={name} />
            </FlatButton>
          ),
        )}
      </CommandBar>

      <Window>
        <WindowTitle>
          <Title>{TITLE}</Title>
        </WindowTitle>
        <ActionBar>
          <FlatButton type="button" aria-label="Partner card">
            <Icon name="personCard" />
          </FlatButton>
          <ActionText as="span" $left={6} $right={0}>
            <BarSplit />
          </ActionText>
          <ActionText type="button" disabled $left={12} $right={20}>
            Outbound Delivery Order
          </ActionText>
          <ActionText type="button" $left={0} $right={10}>
            Outbound Delivery
          </ActionText>
          <BarSplit />
          <ActionText type="button" aria-label="Log" $left={6} $right={0}>
            <Icon name="scroll" />
          </ActionText>
        </ActionBar>

        <Section $top={9}>
          <SectionMain>
            <SearchRow onSubmit={(e) => e.preventDefault()}>
              <SearchLabel htmlFor="show">Show</SearchLabel>
              <Picker $width={329}>
                <Select id="show" />
              </Picker>
              <SearchLabel htmlFor="find" $left={41}>
                Find
              </SearchLabel>
              <Picker $width={229}>
                <Select id="find">
                  <option>DOCNO_ODO Outbound D...</option>
                </Select>
              </Picker>
              <FindBox>
                <Input aria-label="Find value" defaultValue="80000091" />
              </FindBox>
              <YellowButton type="submit" aria-label="Search" $width={29} $center>
                <Icon name="clockCheck" />
              </YellowButton>
              <Push />
              <YellowButton type="button" $width={219} $center>
                Open Advanced Search
              </YellowButton>
            </SearchRow>
            <Tools>
              <ToolRow items={headerTools} />
            </Tools>
            <GridBox>
              <GridTools>
                <ToolRow short items={[{ icon: "detail" }, "|", ...gridTools(true)]} />
              </GridTools>
              <GridView $height={153}>
                <DataTable label="Outbound delivery orders" columns={orderColumns} rows={orderRows} />
              </GridView>
              <ScrollBar left={210} thumb={248} />
              <Marker $x={122} $y={25} $w={89} $h={73} />
            </GridBox>
          </SectionMain>
          <SideButton type="button" aria-label="Side panel" $center>
            <Icon name="sidePage" size={18} />
          </SideButton>
        </Section>

        <Section>
          <SectionMain>
            <Tabs tabs={headerTabs} />
            <TabPanel>
              <Tools>
                <ToolRow items={itemTools} />
              </Tools>
              <GridBox>
                <GridTools>
                  <ToolRow short items={[{ icon: "detail" }, "|", ...gridTools(false)]} />
                </GridTools>
                <GridView $height={257}>
                  <DataTable label="Items" columns={itemColumns} rows={itemRows} />
                </GridView>
                <ScrollBar left={167} thumb={100} />
              </GridBox>
            </TabPanel>
          </SectionMain>
          <SideButton type="button" aria-label="Side panel" $center>
            <Icon name="sidePage" size={18} />
          </SideButton>
        </Section>

        <Section $top={7} $grow>
          <SectionMain>
            <Tabs tabs={detailTabs}>
              <StackEdge $top={1} />
              <StackEdge $top={3} />
              <TabNav>
                <TabNavButton type="button" disabled aria-label="Previous tab">
                  <svg width="6" height="9" viewBox="0 0 6 9" aria-hidden="true">
                    <path d="M5 0v9L0 4.500z" fill="#8fb3c8" />
                  </svg>
                </TabNavButton>
                <TabNavButton type="button" aria-label="Next tab">
                  <svg width="6" height="9" viewBox="0 0 6 9" aria-hidden="true">
                    <path d="M0 0l5 4.500L0 9z" fill="#335a75" />
                  </svg>
                </TabNavButton>
                <TabNavButton type="button" aria-label="Tab list">
                  <svg width="12" height="12" viewBox="0 0 12 12" aria-hidden="true">
                    <path d="M1.500 9.500v-8h4v1h5v7z" fill="none" stroke="#335a75" />
                    <path d="M12 8v4H8z" fill="#335a75" />
                  </svg>
                </TabNavButton>
              </TabNav>
            </Tabs>
            <TabPanel $grow>
              <Tools>
                <ToolRow items={detailTools} />
              </Tools>
              <GridBox $grow>
                <GridTools>
                  <ToolRow short items={gridTools(true)} />
                </GridTools>
                <GridView $height={117}>
                  <DataTable label="Reference documents" columns={refColumns} rows={refRows} />
                </GridView>
                <Marker $x={347} $y={1} $w={123} $h={146} />
              </GridBox>
            </TabPanel>
          </SectionMain>
          <SideButton type="button" aria-label="Side panel" $center>
            <Icon name="sidePage" size={18} />
          </SideButton>
        </Section>
      </Window>
    </Page>
  );
}
